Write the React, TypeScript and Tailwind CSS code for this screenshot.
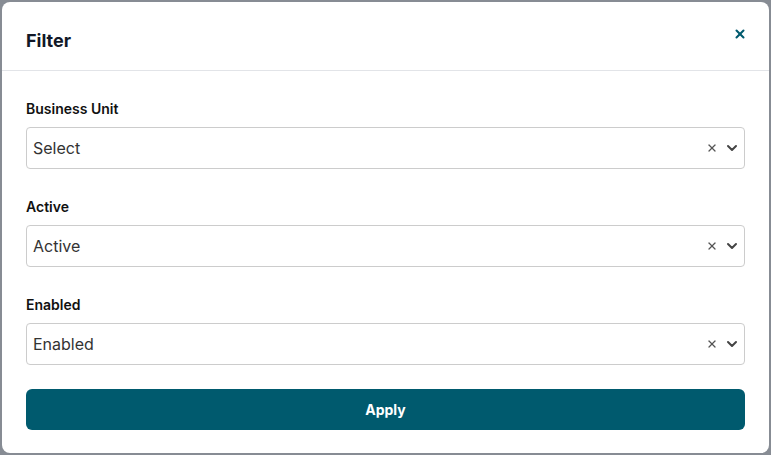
import React from "react";
import { X, ChevronDown } from "lucide-react";

const fields = [
  { label: "Business Unit", value: "Select" },
  { label: "Active", value: "Active" },
  { label: "Enabled", value: "Enabled" },
];

const SelectBox = ({ value }: { value: string }) => (
  <div className="flex h-[42px] items-center rounded-[4px] border border-[#cccccc] bg-white pl-[6px] pr-[4px]">
    <span className="flex-1 text-[16px] text-[#333333]">{value}</span>
    <X size={12} strokeWidth={2.5} className="mr-[6px] text-[#555555]" />
    <ChevronDown size={16} strokeWidth={3} className="text-[#444444]" />
  </div>
);

export default function App() {
  return (
    <div
      className="h-[455px] w-[771px] bg-[#878c94] p-[2px]"
      style={{ fontFamily: "Inter, 'Liberation Sans', sans-serif" }}
    >
      <div className="flex h-full flex-col rounded-lg bg-white">
        <div className="flex h-[69px] items-start justify-between border-b border-[#e2e4e8] pl-6 pr-[22px]">
          <h2 className="mt-[25px] text-[18px] font-bold leading-7 text-[#111827]">Filter</h2>
          <X size={14} strokeWidth={3.5} className="mt-[25px] text-[#005a6e]" />
        </div>
        <div className="flex flex-col px-6 pt-[28px]">
          {fields.map((f) => (
            <div key={f.label} className="mb-[28px] flex flex-col">
              <label className="mb-[8px] text-[14px] font-semibold leading-5 text-[#111111]">
                {f.label}
              </label>
              <SelectBox value={f.value} />
            </div>
          ))}
          <button className="-mt-[4px] h-[41px] w-full rounded-md bg-[#005a6e] text-[14px] font-bold text-white">
            Apply
          </button>
        </div>
      </div>
    </div>
  );
}
